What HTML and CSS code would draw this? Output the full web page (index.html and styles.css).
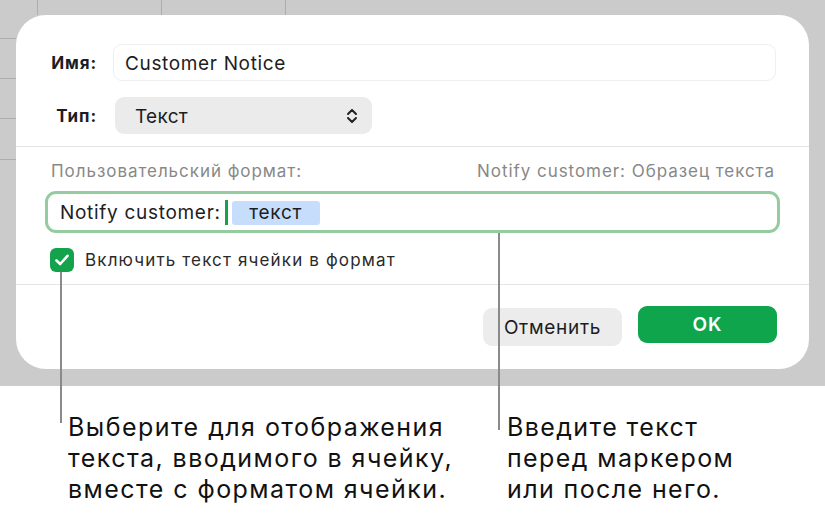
FILE: index.html
```html
<!DOCTYPE html>
<html lang="ru">
<head>
<meta charset="utf-8">
<title>Custom format</title>
<link rel="stylesheet" href="styles.css">
</head>
<body>
<div class="page">
  <div class="stage">
    <div class="dialog">
      <div class="sec-top">
        <div class="row">
          <span class="lbl">Имя:</span>
          <div class="input">Customer Notice</div>
        </div>
        <div class="row row2">
          <span class="lbl">Тип:</span>
          <div class="popup">
            <span>Текст</span>
            <svg class="chev" width="12" height="20" viewBox="0 0 12 20"><path d="M2 8 L6 4 L10 8 M2 12 L6 16 L10 12" fill="none" stroke="#222" stroke-width="2" stroke-linecap="round" stroke-linejoin="round"/></svg>
          </div>
        </div>
      </div>
      <div class="sep"></div>
      <div class="sec-mid">
        <div class="fmt-head">
          <span>Пользовательский формат:</span>
          <span>Notify customer: Образец текста</span>
        </div>
        <div class="token-field">
          <span class="plain">Notify customer:</span><span class="caret"></span><span class="token">текст</span>
        </div>
        <div class="check-row">
          <span class="checkbox"><svg width="16" height="14" viewBox="0 0 16 14"><path d="M2.5 7.5 L6.2 11 L13.5 2.8" fill="none" stroke="#fff" stroke-width="2.6" stroke-linecap="round" stroke-linejoin="round"/></svg></span>
          <span class="check-lbl">Включить текст ячейки в формат</span>
        </div>
      </div>
      <div class="sep"></div>
      <div class="sec-btns">
        <button class="btn cancel">Отменить</button>
        <button class="btn ok">OK</button>
      </div>
    </div>
  </div>
  <div class="captions">
    <p class="cap cap-left">Выберите для отображения<br>текста, вводимого в ячейку,<br>вместе с форматом ячейки.</p>
    <p class="cap cap-right">Введите текст<br>перед маркером<br>или после него.</p>
  </div>
  <div class="callout callout-left"></div>
  <div class="callout callout-right"></div>
</div>
</body>
</html>
```

FILE: styles.css
```css
* { box-sizing: border-box; }
html, body { margin: 0; padding: 0; background: #fff; }
body { font-family: Inter, "Noto Sans", sans-serif; color: #1d1d1f; }

.page { position: relative; width: 825px; height: 521px; overflow: hidden; }

.stage {
  height: 386px;
  padding: 15px 16px 0 16px;
  background-color: #cbcbcb;
  background-image:
    linear-gradient(#adadad, #adadad),
    linear-gradient(#adadad, #adadad),
    linear-gradient(#adadad, #adadad),
    linear-gradient(#adadad, #adadad),
    linear-gradient(#adadad, #adadad),
    linear-gradient(#adadad, #adadad),
    linear-gradient(#adadad, #adadad);
  background-repeat: no-repeat;
  background-size: 1px 15px, 1px 15px, 1px 15px, 16px 1px, 16px 1px, 16px 1px, 16px 1px;
  background-position: 37px 0, 161px 0, 285px 0, 0 38px, 0 78px, 0 118px, 0 159px;
}

.dialog {
  width: 793px;
  height: 354px;
  background: #fff;
  border-radius: 30px;
  display: flex;
  flex-direction: column;
}

.sec-top { padding: 29px 33px 12px 30px; display: flex; flex-direction: column; gap: 16px; }
.row { display: flex; align-items: center; gap: 16px; }
.lbl { width: 51px; text-align: right; font-weight: 700; font-size: 17px; letter-spacing: 0.9px; color: #1d1d1f; padding-top: 1px; }
.input {
  flex: 1;
  height: 37px;
  border: 1.5px solid #efefef;
  border-radius: 9px;
  padding: 2px 11px 0 11px;
  display: flex; align-items: center;
  font-size: 19px;
  letter-spacing: 0.65px;
  color: #1d1d1f;
}
.popup {
  margin-left: 2px;
  width: 257px;
  height: 37px;
  background: #ebebeb;
  border-radius: 9px;
  display: flex; align-items: center; justify-content: space-between;
  padding: 1px 14px 0 20px;
  font-size: 19px;
  letter-spacing: 0.3px;
}
.chev { display: block; }

.sep { height: 1px; background: #e4e4e4; }

.sec-mid { padding: 14px 29px 12px 29px; display: flex; flex-direction: column; }
.fmt-head {
  display: flex; justify-content: space-between;
  padding: 0 5px 0 6px;
  font-size: 17px; line-height: 20px; letter-spacing: 0.95px; color: #888;
}
.token-field {
  margin-top: 10px;
  height: 42px;
  border: 3px solid #94cc9f;
  border-radius: 11px;
  display: flex; align-items: center;
  padding: 1px 12px 0 12px;
  font-size: 19px;
  letter-spacing: 0.7px;
}
.plain { color: #1d1d1f; }
.caret { width: 3px; height: 25px; background: #16a34a; margin: 0 4px 0 4px; }
.token {
  width: 88px; height: 24px;
  background: #c6defc;
  border-radius: 3px;
  display: flex; align-items: center; justify-content: center;
  color: #1d1d1f;
}
.check-row { margin-top: 15px; display: flex; align-items: center; gap: 11px; padding-left: 5px; }
.checkbox {
  width: 24px; height: 24px; border-radius: 6px;
  background: #15a24d;
  display: flex; align-items: center; justify-content: center;
}
.checkbox svg { display: block; }
.check-lbl { font-size: 17px; letter-spacing: 1.15px; color: #2a2a2a; }

.sec-btns { padding: 21px 32px 0 0; display: flex; justify-content: flex-end; gap: 16px; align-items: flex-start; }
.btn {
  width: 139px; height: 38px; border: none; border-radius: 9px;
  font-family: Inter, "Noto Sans", sans-serif; font-size: 19px; letter-spacing: 0.7px;
}
.cancel { background: #ececec; color: #1d1d1f; margin-top: 2px; }
.ok { background: #0ea54d; color: #fff; font-weight: 600; height: 37px; letter-spacing: 1px; }

.captions { display: flex; padding-top: 26px; }
.cap { margin: 0; font-size: 25px; line-height: 31px; letter-spacing: 1.45px; color: #111; white-space: nowrap; }
.cap-left { margin-left: 68px; width: 400px; }
.cap-right { margin-left: 39px; width: 300px; letter-spacing: 1.4px; }

.callout { position: absolute; width: 2px; background: #8a8a8a; }
.callout-left { left: 60px; top: 272px; height: 151px; }
.callout-right { left: 498px; top: 233px; height: 197px; }
```
